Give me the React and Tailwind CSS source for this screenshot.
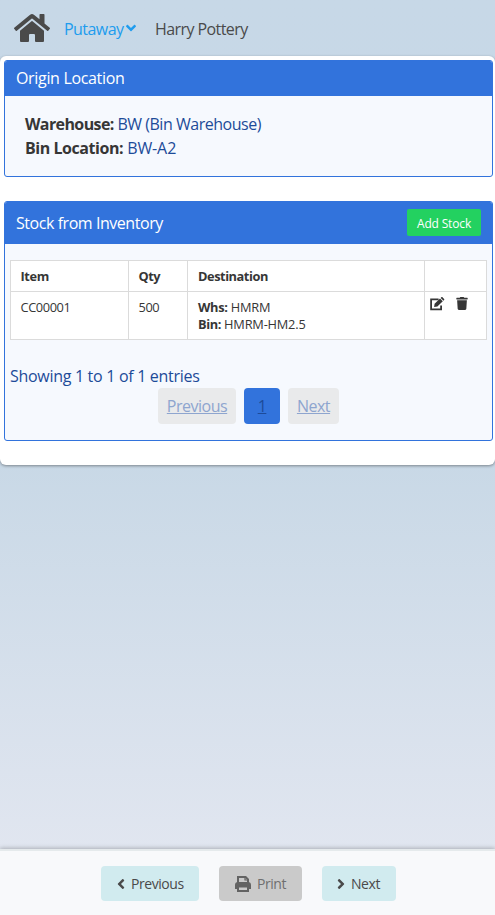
import React from "react";
import { FaHome, FaAngleDown, FaAngleLeft, FaAngleRight, FaTrash } from "react-icons/fa";

function EditIcon() {
  return (
    <svg className="h-[14px] w-[15px]" viewBox="0 0 15 14" fill="none">
      <path d="M8.6 2.3H1.1v10.1h10V8.6" stroke="#363636" strokeWidth="1.8" />
      <path d="M4.1 10l.5-3.3 5.4-5.3 2.8 2.8-5.4 5.3zM10.7.9l.6-.6c.4-.4.9-.4 1.2 0l1.6 1.6c.3.3.3.8 0 1.2l-.6.6z" fill="#363636" />
    </svg>
  );
}

function PrintIcon() {
  return (
    <svg className="h-4 w-4" viewBox="0 0 16 16" fill="none" stroke="#636363" strokeWidth="2">
      <path d="M3 7V1h7.6L13 3.4V7" />
      <path d="M10 1v3h3" strokeWidth="1.2" />
      <path d="M3 12H1V9a2 2 0 0 1 2-2h10a2 2 0 0 1 2 2v3h-2" />
      <path d="M2 7h12v3H2z" fill="#636363" stroke="none" />
      <path d="M3 10.5h10V15H3z" />
    </svg>
  );
}

function Card({ title, action, headerClass, titleClass, children }) {
  return (
    <article className="overflow-hidden rounded-[3px] border border-[#3273dc] bg-[#f6f9fe]">
      <header className={`flex justify-between bg-[#3273dc] px-[11px] text-white ${headerClass}`}>
        <h2 className={`whitespace-nowrap ${titleClass}`}>{title}</h2>
        {action}
      </header>
      {children}
    </article>
  );
}

export default function App() {
  return (
    <div className="flex h-[915px] w-[495px] flex-col overflow-hidden bg-linear-to-b from-[#c7d8e7] from-0% via-[#c8d8e6] via-50% to-[#e1e6f0] to-93% font-['Open_Sans','Noto_Sans',sans-serif] text-[16px] leading-6 text-[#4a4a4a]">
      <nav className="flex h-14 shrink-0 items-center pl-[14px]">
        <FaHome className="h-8 w-9" />
        <a className="ml-[14px] flex items-center text-[#209cee]">
          <span className="w-[60px] pt-px whitespace-nowrap tracking-[-0.55px]">Putaway</span>
          <FaAngleDown className="ml-px h-4 w-3" />
        </a>
        <span className="ml-[18px] pt-px whitespace-nowrap tracking-[-0.58px]">Harry Pottery</span>
      </nav>

      <main className="flex h-[409px] shrink-0 flex-col gap-6 rounded-md bg-white pt-1 pr-[2px] pl-1 shadow-[0_1px_3px_rgba(10,10,10,0.4)]">
        <Card title="Origin Location" headerClass="h-[35px] pt-[5px]" titleClass="tracking-[-0.33px]">
          <div className="h-20 px-5 pt-4 text-[#1d4b99]">
            <p className="whitespace-nowrap tracking-[-0.48px]"><strong className="font-bold tracking-[-0.6px] text-[#363636]">Warehouse:</strong> BW (Bin Warehouse)</p>
            <p className="whitespace-nowrap tracking-[-0.1px]"><strong className="font-bold tracking-[-0.45px] text-[#363636]">Bin Location:</strong> BW-A2</p>
          </div>
        </Card>

        <Card
          title="Stock from Inventory"
          headerClass="h-[42px] pt-[7px]"
          titleClass="pt-[2px] tracking-[-0.45px]"
          action={<button className="h-[27px] w-[74px] rounded-[2px] bg-[#23d160] pt-px text-[12px] leading-[28px] whitespace-nowrap tracking-[-0.16px]">Add Stock</button>}
        >
          <div className="h-[196px] px-[5px] pt-4 text-[#1d4b99]">
            <table className="h-20 w-[477px] table-fixed border-collapse bg-white text-left text-[12.8px] leading-[17px] tracking-[-0.4px] text-[#363636]">
              <colgroup>
                <col className="w-[118px]" />
                <col className="w-[59px]" />
                <col className="w-[237px]" />
                <col className="w-[62px]" />
              </colgroup>
              <thead>
                <tr className="h-[31px]">
                  <th className="border border-[#dbdbdb] px-[9.5px] font-bold">Item</th>
                  <th className="border border-[#dbdbdb] px-[9.5px] font-bold tracking-[-0.5px]">Qty</th>
                  <th className="border border-[#dbdbdb] px-[10px] font-bold tracking-[-0.45px]">Destination</th>
                  <th className="border border-[#dbdbdb]"></th>
                </tr>
              </thead>
              <tbody>
                <tr className="h-12 align-top">
                  <td className="border border-[#dbdbdb] px-[9.5px] pt-[7px]">CC00001</td>
                  <td className="border border-[#dbdbdb] px-[9.5px] pt-[7px]">500</td>
                  <td className="border border-[#dbdbdb] px-[10px] pt-[7px]">
                    <p className="tracking-[-0.2px]"><strong className="font-bold tracking-[-0.3px]">Whs:</strong> HMRM</p>
                    <p className="tracking-[-0.2px]"><strong className="font-bold tracking-[-0.4px]">Bin:</strong> HMRM-HM2.5</p>
                  </td>
                  <td className="border border-[#dbdbdb] pt-[5px] pl-[5px]">
                    <div className="flex gap-[11px]">
                      <EditIcon />
                      <FaTrash className="h-[13px] w-3" />
                    </div>
                  </td>
                </tr>
              </tbody>
            </table>
            <p className="mt-6 whitespace-nowrap tracking-[-0.3px]">Showing 1 to 1 of 1 entries</p>
            <div className="flex h-9 gap-2 pl-[148px] leading-[37px] tracking-[-0.48px]">
              <a className="w-[78px] rounded-[4px] bg-[#e9eaeb] text-center text-[#8ea5cf] underline">Previous</a>
              <a className="w-9 rounded-[4px] bg-[#3273dc] text-center text-[#1d4b99] underline">1</a>
              <a className="w-[51px] rounded-[4px] bg-[#e9eaeb] text-center text-[#8ea5cf] underline">Next</a>
            </div>
          </div>
        </Card>
      </main>

      <footer className="mt-auto flex h-[66px] shrink-0 gap-5 border-t-2 border-[#e5eaec] bg-[#f8f9fb] pt-[15px] pl-[101px] text-[14px] tracking-[-0.45px] shadow-[0_-1px_4px_rgba(10,10,10,0.25)]">
        <button className="flex h-[35px] w-[98px] items-center rounded-[4px] bg-[#d1ebef] pl-[15px]">
          <FaAngleLeft className="mr-[5px] h-4 w-[10px]" />
          <span className="pt-px">Previous</span>
        </button>
        <button className="flex h-[35px] w-[83px] items-center rounded-[4px] bg-[#cacaca] pl-4 text-[#6f6f6f]">
          <PrintIcon />
          <span className="ml-[6px] pt-px">Print</span>
        </button>
        <button className="flex h-[35px] w-[74px] items-center rounded-[4px] bg-[#d1ebef] pl-[14px]">
          <FaAngleRight className="mr-[5px] h-4 w-[10px]" />
          <span className="pt-px">Next</span>
        </button>
      </footer>
    </div>
  );
}
